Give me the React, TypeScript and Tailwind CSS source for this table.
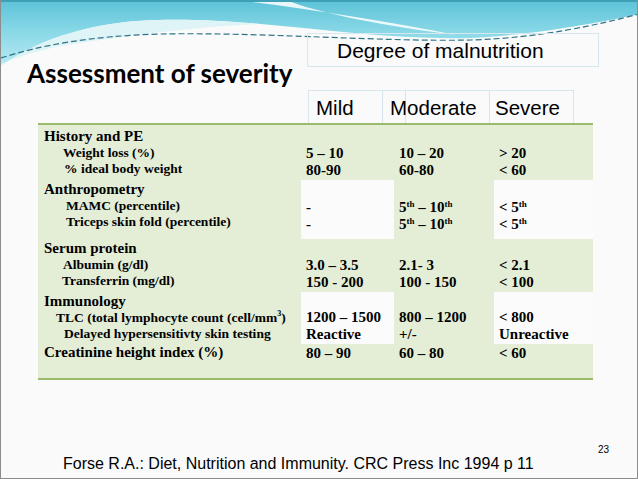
import React from "react";

type Row = {
  h: number;
  labelPt: number;
  valPt: number;
  head: string;
  subs: { t: React.ReactNode; ind: number }[];
  vals: React.ReactNode[][];
  white: boolean;
};

const th = <sup className="text-[9px] -top-[0.6em]">th</sup>;

const rows: Row[] = [
  {
    h: 55,
    labelPt: 2,
    valPt: 20,
    head: "History and PE",
    subs: [
      { t: "Weight loss (%)", ind: 19 },
      { t: "% ideal body weight", ind: 20 },
    ],
    vals: [
      ["5 – 10", "80-90"],
      ["10 – 20", "60-80"],
      ["> 20", "< 60"],
    ],
    white: false,
  },
  {
    h: 59,
    labelPt: 0,
    valPt: 19,
    head: "Anthropometry",
    subs: [
      { t: "MAMC (percentile)", ind: 22 },
      { t: "Triceps skin fold (percentile)", ind: 22 },
    ],
    vals: [
      ["-", "-"],
      [
        <>5{th} – 10{th}</>,
        <>5{th} – 10{th}</>,
      ],
      [<>&lt; 5{th}</>, <>&lt; 5{th}</>],
    ],
    white: true,
  },
  {
    h: 53,
    labelPt: 0,
    valPt: 18,
    head: "Serum protein",
    subs: [
      { t: "Albumin (g/dl)", ind: 19 },
      { t: "Transferrin (mg/dl)", ind: 18 },
    ],
    vals: [
      ["3.0 – 3.5", "150 - 200"],
      ["2.1- 3", "100 - 150"],
      ["< 2.1", "< 100"],
    ],
    white: false,
  },
  {
    h: 52,
    labelPt: 0,
    valPt: 17,
    head: "Immunology",
    subs: [
      {
        t: (
          <>
            TLC (total lymphocyte count (cell/mm
            <sup className="text-[8px] -top-[0.8em]">3</sup>)
          </>
        ),
        ind: 12,
      },
      { t: "Delayed hypersensitivty skin testing", ind: 20 },
    ],
    vals: [
      ["1200 – 1500", "Reactive"],
      ["800 – 1200", "+/-"],
      ["< 800", "Unreactive"],
    ],
    white: true,
  },
  {
    h: 34,
    labelPt: 0,
    valPt: 1,
    head: "Creatinine height index (%)",
    subs: [],
    vals: [["80 – 90"], ["60 – 80"], ["< 60"]],
    white: false,
  },
];

const Wave = () => (
  <svg
    className="absolute left-0 top-0"
    width="638"
    height="80"
    viewBox="0 0 638 80"
  >
    <defs>
      <linearGradient id="cy" x1="0" y1="0" x2="0" y2="1">
        <stop offset="0" stopColor="#5cc2d8" />
        <stop offset="0.5" stopColor="#8bd9e7" />
        <stop offset="1" stopColor="#b8eaf2" />
      </linearGradient>
    </defs>
    <path
      d="M0 0 H638 V14 C600 22 540 34 470 38 C400 40 330 30 260 24 C200 19 150 18 110 24 C60 32 25 48 0 66 Z"
      fill="url(#cy)"
    />
    <path
      d="M0 66 C25 48 60 32 110 24 C150 18 200 19 260 24 C200 26 120 36 60 46 C30 52 10 60 0 64 Z"
      fill="#dff4f7"
    />
    <path
      d="M235 0 C300 8 380 20 455 35 C385 26 320 14 285 0 Z"
      fill="#ffffff"
      opacity="0.85"
    />
    <path
      d="M0 58 C40 45 90 36 160 34 C260 32 380 42 470 40 C540 38 600 24 638 14"
      fill="none"
      stroke="#2f7486"
      strokeWidth="1.2"
      strokeDasharray="6 3"
    />
    <rect x="0" y="0" width="638" height="2" fill="#3f9fb6" />
  </svg>
);

export default function App() {
  return (
    <div className="relative w-[638px] h-[479px] overflow-hidden bg-[#fafafa] border-x border-b border-[#8c8c8c]">
      <Wave />
      <div className="relative flex flex-col pt-[33px]">
        <div className="grid grid-cols-[306px_1fr] grid-rows-[34px_23px_33px]">
          <div className="row-span-3 pl-[26px] pt-[24px]">
            <h1 className="text-[26px] font-bold leading-[32px] text-black font-['Lato',sans-serif]">
              Assessment of severity
            </h1>
          </div>
          <div className="w-[292px] border border-[#d7e7ee] flex items-center pl-[29px] pt-[2px] text-[21px] text-black font-['Liberation_Sans',Arial,sans-serif]">
            Degree of malnutrition
          </div>
          <div />
          <div className="flex h-[33px] w-[266px] ml-[1px] border-x border-t border-[#d7e7ee] text-[20.5px] text-black font-['Liberation_Sans',Arial,sans-serif]">
            <div className="w-[74px] border-r border-[#d7e7ee] pl-[7px] pt-[2px] flex items-center">
              Mild
            </div>
            <div className="relative w-[107px] border-r border-[#d7e7ee] pl-[7px] pt-[2px] flex items-center">
              <span className="absolute left-[22px] top-0 h-full border-l border-[#d7e7ee]" />
              <span className="relative">Moderate</span>
            </div>
            <div className="flex-1 pl-[5px] pt-[2px] flex items-center">Severe</div>
          </div>
        </div>

        <div className="ml-[37px] w-[555px] bg-[#e4edd6] border-t-2 border-b-2 border-[#9cba6b] font-['Liberation_Serif','Times_New_Roman',serif] font-bold text-black">
          {rows.map((r, i) => (
            <div
              key={i}
              className="grid grid-cols-[263px_93px_100px_99px]"
              style={{ height: r.h }}
            >
              <div style={{ paddingTop: r.labelPt }} className="pl-[6px]">
                <div
                  className={
                    r.subs.length
                      ? "text-[15px] leading-[18px]"
                      : "text-[15px] leading-[16px]"
                  }
                >
                  {r.head}
                </div>
                {r.subs.map((s, j) => (
                  <div
                    key={j}
                    className="text-[13.5px] leading-[15.5px] whitespace-nowrap"
                    style={{ paddingLeft: s.ind }}
                  >
                    {s.t}
                  </div>
                ))}
              </div>
              {r.vals.map((v, k) => (
                <div
                  key={k}
                  className={
                    r.white && k !== 1
                      ? "bg-[#fbfbfb] pl-[5px] text-[15px] leading-[17px]"
                      : "pl-[5px] text-[15px] leading-[17px]"
                  }
                  style={{ paddingTop: r.valPt }}
                >
                  {v.map((x, m) => (
                    <div key={m} className="whitespace-nowrap">
                      {x}
                    </div>
                  ))}
                </div>
              ))}
            </div>
          ))}
        </div>

        <div className="flex justify-end pr-[28px] pt-[64px] text-[10px] leading-[12px] text-black font-['Liberation_Sans',Arial,sans-serif]">
          23
        </div>
        <div className="pl-[62px] -mt-[2px] text-[16px] leading-[20px] text-black font-['Liberation_Sans',Arial,sans-serif]">
          Forse R.A.: Diet, Nutrition and Immunity. CRC Press Inc 1994 p 11
        </div>
      </div>
    </div>
  );
}
